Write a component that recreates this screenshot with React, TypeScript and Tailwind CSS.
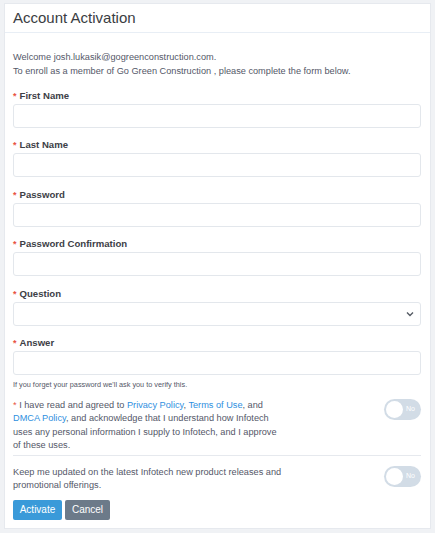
import React from 'react';

const font = { fontFamily: '"Liberation Sans", Arial, sans-serif' };

function Label({ children }: { children: React.ReactNode }) {
  return (
    <div className="flex h-[14px] items-center text-[9.6px] font-bold leading-[14px] text-[#3d4046]">
      <span className="mr-[3px] text-[9px] text-[#e8533f]">*</span>
      {children}
    </div>
  );
}

function Field({ label, select }: { label: string; select?: boolean }) {
  return (
    <div className="mb-[10.4px]">
      <Label>{label}</Label>
      <div className="mt-[1px] flex h-[24px] items-center justify-end rounded-[3px] border border-[#e3e7ec] bg-white pr-[6px]">
        {select && (
          <svg width="8" height="6" viewBox="0 0 8 6" fill="none">
            <path d="M1 1.5 L4 4.5 L7 1.5" stroke="#555b64" strokeWidth="1.4" />
          </svg>
        )}
      </div>
    </div>
  );
}

function Toggle() {
  return (
    <div className="flex h-[21px] w-[37px] shrink-0 items-center rounded-full bg-[#d2dce6] px-[2px]">
      <div className="h-[17px] w-[17px] rounded-full bg-white" />
      <span className="ml-[3px] text-[7px] text-white">No</span>
    </div>
  );
}

export default function App() {
  return (
    <div className="h-[533px] w-[435px] bg-[#f0f2f5] pl-[4px] pt-[3px]" style={font}>
      <div className="h-[526px] w-[427px] border border-[#e6e9ee] bg-white">
        {/* ヘッダー */}
        <div className="flex h-[29px] items-center border-b border-[#e8eef5] px-[8px] text-[15px] text-[#3a3d42]">
          Account Activation
        </div>

        <div className="pl-[8px] pr-[9px] pt-[17px]">
          <p className="text-[9.2px] leading-[14px] text-[#545768]">
            Welcome josh.lukasik@gogreenconstruction.com.
            <br />
            To enroll as a member of Go Green Construction , please complete the form below.
          </p>

          <div className="mt-[11px]">
            <Field label="First Name" />
            <Field label="Last Name" />
            <Field label="Password" />
            <Field label="Password Confirmation" />
            <Field label="Question" select />
            <div>
              <Label>Answer</Label>
              <div className="mt-[1px] h-[24px] rounded-[3px] border border-[#e3e7ec] bg-white" />
              <p className="mt-[4px] text-[7.3px] leading-[12px] text-[#545768]">
                If you forget your password we'll ask you to verify this.
              </p>
            </div>
          </div>

          {/* 規約 */}
          <div className="mt-[8px] flex items-start justify-between border-b border-[#e6e9ee] pb-[2px]">
            <p className="w-[272px] text-[9.2px] leading-[13.5px] text-[#545768]">
              <span className="text-[#e8533f]">* </span>I have read and agreed to{' '}
              <span className="text-[#2f8fe0]">Privacy Policy</span>,{' '}
              <span className="text-[#2f8fe0]">Terms of Use</span>, and{' '}
              <span className="text-[#2f8fe0]">DMCA Policy</span>, and acknowledge that I understand how
              Infotech uses any personal information I supply to Infotech, and I approve of these uses.
            </p>
            <div className="mt-[0px]">
              <Toggle />
            </div>
          </div>

          <div className="mt-[10px] flex items-start justify-between">
            <p className="w-[300px] text-[9.2px] leading-[13.5px] text-[#545768]">
              Keep me updated on the latest Infotech new product releases and promotional offerings.
            </p>
            <div className="mt-[0px]">
              <Toggle />
            </div>
          </div>

          {/* ボタン */}
          <div className="mt-[7px] flex gap-[3px]">
            <button className="h-[20px] w-[49px] rounded-[2px] bg-[#3a9ad9] text-[10px] text-white">
              Activate
            </button>
            <button className="h-[20px] w-[45px] rounded-[2px] bg-[#6c7a89] text-[10px] text-white">
              Cancel
            </button>
          </div>
        </div>
      </div>
    </div>
  );
}
